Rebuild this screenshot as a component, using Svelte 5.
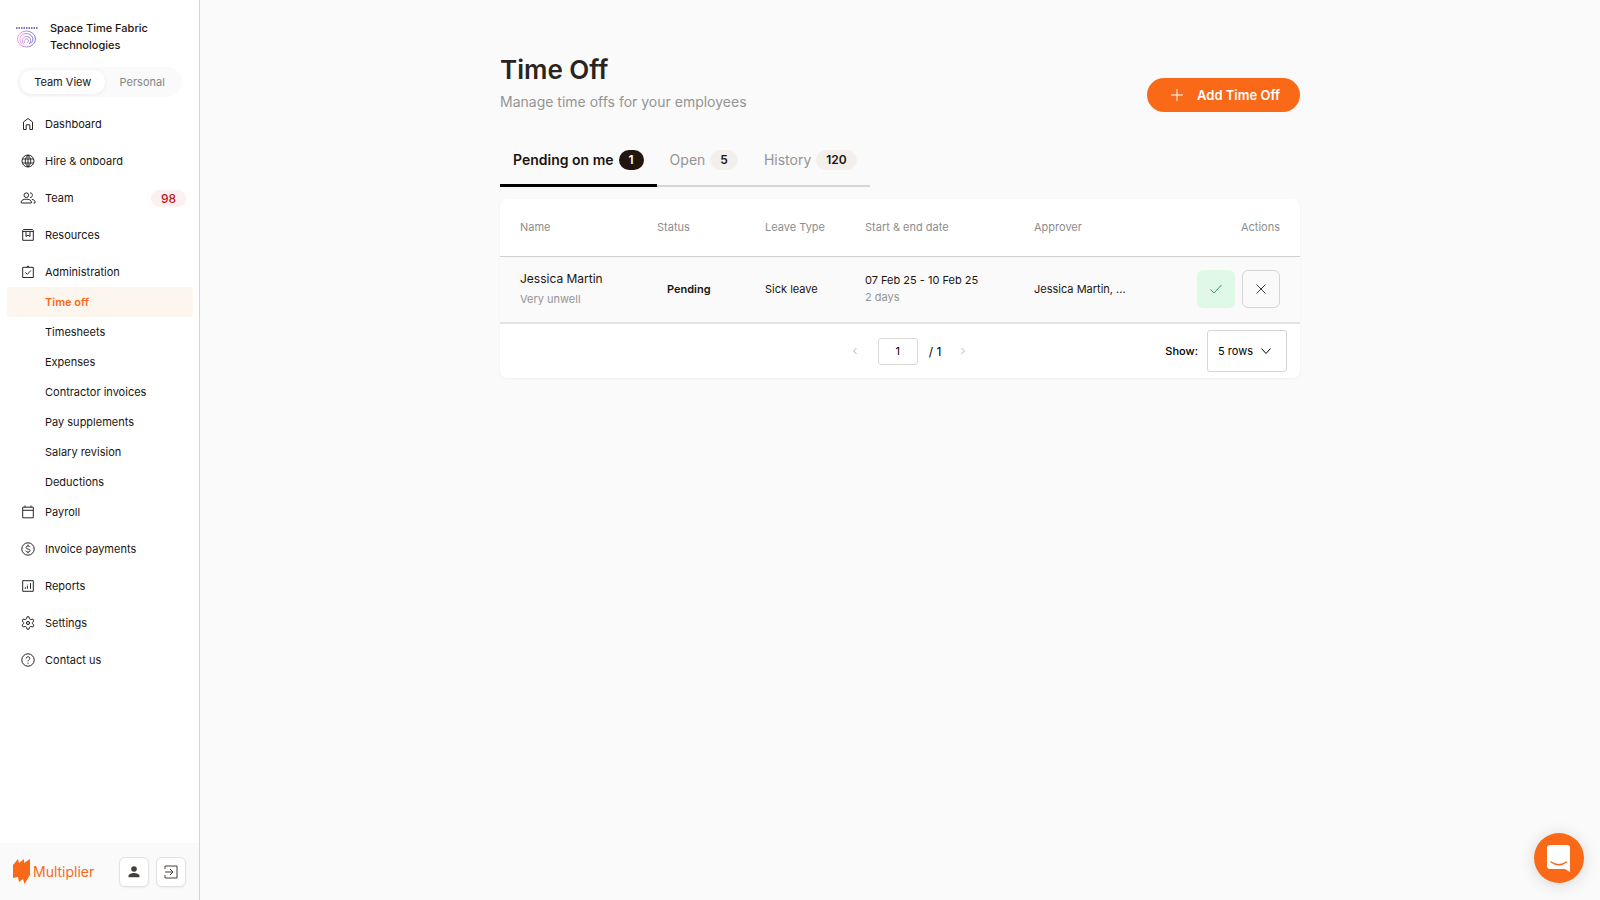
<script>
  const icons = {
    home: 'M3.5 13.5V6L8 2.5 12.5 6v7.5h-2.7V8.8H6.2v4.7z',
    globe:
      'M14 8A6 6 0 1 1 2 8a6 6 0 0 1 12 0zM8 2c-3.6 3.6-3.6 8.4 0 12M8 2c3.6 3.6 3.6 8.4 0 12M2.6 6h10.8M2.6 10h10.8M8 2v12',
    team:
      'M8.6 5.2a2.3 2.3 0 1 1-4.6 0 2.3 2.3 0 0 1 4.6 0zM1.3 13v-1.3C1.3 10 4 9.2 6.3 9.2s5 .8 5 2.5V13zM10 2.9c3.2-.3 3.2 4.8 0 4.6M11.8 9.4c2.2.4 3.2 1.2 3.2 2.4V13h-1.6',
    resources:
      'M2.7 3.6V13.3h10.6V3.6l-.9-1.1H3.6zM2.7 4.4h10.6M6 4.6v4.9l2-1.4 2 1.4V4.6',
    admin: 'M2.7 3.3h10.6v10.2H2.7zM6.6 3.2L8 1.9l1.4 1.3M5.4 8.4l1.9 1.9 3.6-3.8',
    calendar: 'M2.7 3.2h10.6v10.6H2.7zM2.7 6.3h10.6M5 3.2V1.5M11 3.2V1.5',
    dollar:
      'M14.2 8A6.2 6.2 0 1 1 1.8 8a6.2 6.2 0 0 1 12.4 0zM10 6.2C9.6 5.2 9 5 8 5c-2.6 0-2.6 2.7 0 3s2.8 3 0 3c-1.2 0-1.9-.4-2.1-1.4M8 3.7V5M8 11v1.3',
    reports: 'M2.7 2.7h10.6v10.6H2.7zM5.3 10.8V9.2M7.4 10.8V7.7M7.4 6.4v-.4M10.5 10.8V5.2',
    settings:
      'M7 1.8h2l.5 2 1.3.8 2-.6 1.1 2-1.6 1.4v1.2l1.6 1.4-1.1 2-2-.6-1.300.8-.5 2H7l-.5-2-1.300-.8-2 .6-1.100-2 1.600-1.400V7.400L2.100 6l1.100-2 2 .6 1.300-.8zM9.600 8a1.600 1.600 0 1 1-3.200 0 1.600 1.600 0 0 1 3.200 0zM8 7.500v1',
    help:
      'M14.2 8A6.2 6.2 0 1 1 1.8 8a6.2 6.2 0 0 1 12.4 0zM6.2 6.4c.1-2.300 3.700-2.200 3.600 0 0 1.300-1.800 1.400-1.800 3M8 10.700v1.100',
  };

  const nav = [
    { label: 'Dashboard', icon: 'home' },
    { label: 'Hire & onboard', icon: 'globe' },
    { label: 'Team', icon: 'team', badge: 98 },
    { label: 'Resources', icon: 'resources' },
    {
      label: 'Administration',
      icon: 'admin',
      children: [
        'Time off',
        'Timesheets',
        'Expenses',
        'Contractor invoices',
        'Pay supplements',
        'Salary revision',
        'Deductions',
      ],
    },
    { label: 'Payroll', icon: 'calendar' },
    { label: 'Invoice payments', icon: 'dollar' },
    { label: 'Reports', icon: 'reports' },
    { label: 'Settings', icon: 'settings' },
    { label: 'Contact us', icon: 'help' },
  ];

  const tabs = [
    { label: 'Pending on me', count: 1 },
    { label: 'Open', count: 5 },
    { label: 'History', count: 120 },
  ];

  const requests = [
    {
      name: 'Jessica Martin',
      note: 'Very unwell',
      status: 'Pending',
      type: 'Sick leave',
      dates: '07 Feb 25 - 10 Feb 25',
      days: '2 days',
      approver: 'Jessica Martin, ...',
    },
  ];

  let activePage = $state('Time off');
  let activeTab = $state('Pending on me');
  let view = $state('Team View');
  let page = $state('1');
  let rows = $state('5 rows');
</script>

<div class="app">
  <aside class="sidebar">
    <div class="company">
      <svg class="company-logo" viewBox="0 0 22 22" aria-hidden="true">
        <defs>
          <linearGradient id="swirl" x1="0" x2="1">
            <stop offset="0" stop-color="#f3a0dc" />
            <stop offset="1" stop-color="#7d78d8" />
          </linearGradient>
        </defs>
        <path d="M0 2h22" stroke="#7377c4" stroke-width="2" stroke-dasharray="1.5 1" />
        <g fill="none" stroke="url(#swirl)" stroke-width="1">
          <ellipse cx="10.5" cy="13" rx="9" ry="8" />
          <path
            d="M6 18c-4-4-2-10 4-10.5 6 0 9 6 5 10M8 18.5c-3-3-2-7 2-8 5 0 6 5 3 7.5M9 17c-2-2 0-4.5 2-4 2 .5 2 3 0 3.5" />
        </g>
      </svg>
      <span>Space Time Fabric Technologies</span>
    </div>

    <div class="switch">
      {#each ['Team View', 'Personal'] as option}
        <button class:on={view === option} onclick={() => (view = option)}>{option}</button>
      {/each}
    </div>

    <nav>
      <ul class="menu">
        {#each nav as item}
          <li class:group={item.children}>
            <a class="item" href="#top">
              <svg viewBox="0 0 16 16" aria-hidden="true"><path d={icons[item.icon]} /></svg>
              <span>{item.label}</span>
              {#if item.badge}
                <span class="badge">{item.badge}</span>
              {/if}
            </a>
            {#if item.children}
              <ul class="submenu">
                {#each item.children as child}
                  <li>
                    <a
                      href="#top"
                      class:active={activePage === child}
                      onclick={() => (activePage = child)}>{child}</a>
                  </li>
                {/each}
              </ul>
            {/if}
          </li>
        {/each}
      </ul>
    </nav>

    <footer class="account">
      <a class="brand" href="#top">
        <svg viewBox="0 0 17 25" aria-hidden="true">
          <path d="M0 6l5-6 1 4 5-4v4l6-4v16l-5.500 9-1.500-5-4 3-1-5-5 1z" />
        </svg>
        <span>Multiplier</span>
      </a>
      <button aria-label="Profile">
        <svg viewBox="0 0 16 16">
          <circle cx="8" cy="5" r="2.8" />
          <path d="M2.5 13.3v-1.2C2.5 9.9 5.7 9 8 9s5.5.9 5.5 3.1v1.2z" />
        </svg>
      </button>
      <button aria-label="Log out">
        <svg class="line" viewBox="0 0 16 16">
          <path d="M2 5V2h12v12H2v-3M2 8h7.5M7 5l3 3-3 3" />
        </svg>
      </button>
    </footer>
  </aside>

  <main>
    <div class="content">
      <header>
        <div>
          <h1>Time Off</h1>
          <p>Manage time offs for your employees</p>
        </div>
        <button class="add">
          <svg viewBox="0 0 12 12" aria-hidden="true"><path d="M6 0v12M0 6h12" /></svg>
          Add Time Off
        </button>
      </header>

      <div class="tabs" role="tablist">
        {#each tabs as tab}
          <button
            role="tab"
            aria-selected={activeTab === tab.label}
            class:selected={activeTab === tab.label}
            onclick={() => (activeTab = tab.label)}>
            {tab.label}
            <span class="count">{tab.count}</span>
          </button>
        {/each}
      </div>

      <section class="card">
        <table>
          <thead>
            <tr>
              <th class="name">Name</th>
              <th class="status">Status</th>
              <th class="type">Leave Type</th>
              <th class="dates">Start &amp; end date</th>
              <th class="approver">Approver</th>
              <th class="actions">Actions</th>
            </tr>
          </thead>
          <tbody>
            {#each requests as request}
              <tr>
                <td>
                  <div class="person">{request.name}</div>
                  <div class="muted">{request.note}</div>
                </td>
                <td><strong>{request.status}</strong></td>
                <td>{request.type}</td>
                <td>
                  <div>{request.dates}</div>
                  <div class="muted">{request.days}</div>
                </td>
                <td>{request.approver}</td>
                <td>
                  <div class="buttons">
                    <button class="approve" aria-label="Approve">
                      <svg viewBox="0 0 14 14"><path d="M1.5 7.5L5 11l7.5-8" /></svg>
                    </button>
                    <button class="reject" aria-label="Reject">
                      <svg viewBox="0 0 14 14"><path d="M2.5 2.5l9 9M11.5 2.5l-9 9" /></svg>
                    </button>
                  </div>
                </td>
              </tr>
            {/each}
          </tbody>
        </table>

        <div class="paging">
          <div class="pager">
            <button aria-label="Previous page" disabled>
              <svg viewBox="0 0 8 8"><path d="M5.5 1l-3 3 3 3" /></svg>
            </button>
            <input aria-label="Page" bind:value={page} />
            <span class="total">/ 1</span>
            <button aria-label="Next page" disabled>
              <svg viewBox="0 0 8 8"><path d="M2.5 1l3 3-3 3" /></svg>
            </button>
          </div>
          <div class="size">
            <label for="rows">Show:</label>
            <div class="select">
              <select id="rows" bind:value={rows}>
                <option>5 rows</option>
                <option>10 rows</option>
                <option>20 rows</option>
              </select>
              <svg viewBox="0 0 12 12" aria-hidden="true"><path d="M1.5 3.5L6 8.5l4.5-5" /></svg>
            </div>
          </div>
        </div>
      </section>
    </div>
  </main>

  <button class="chat" aria-label="Open chat">
    <svg viewBox="0 0 26 28">
      <path
        d="M4 1h17a3 3 0 0 1 3 3v24l-5-3H4a3 3 0 0 1-3-3V4a3 3 0 0 1 3-3z"
        fill="#fff" />
      <path
        d="M5 18c4.5 3.5 11 3.5 15.500 0"
        fill="none"
        stroke="#f96918"
        stroke-width="1.5"
        stroke-linecap="round" />
    </svg>
  </button>
</div>

<style>
  :global(body) {
    margin: 0;
    background: #fafafa;
  }
  .app {
    display: flex;
    min-height: 100vh;
    font-family: Inter, "Open Sans", sans-serif;
    font-size: 11px;
    line-height: 17px;
    color: #1c1410;
  }
  .app * {
    box-sizing: border-box;
  }
  button,
  input,
  select {
    margin: 0;
    padding: 0;
    border: 0;
    background: none;
    font: inherit;
    color: inherit;
  }
  button {
    cursor: pointer;
  }
  a {
    color: inherit;
    text-decoration: none;
  }
  ul {
    margin: 0;
    padding: 0;
    list-style: none;
  }
  svg {
    flex: none;
    fill: none;
    stroke: currentColor;
  }

  .sidebar {
    display: flex;
    flex: none;
    flex-direction: column;
    width: 200px;
    border-right: 1px solid #d4d4d4;
    background: #fff;
  }
  .company {
    display: flex;
    align-items: center;
    gap: 12px;
    padding: 20px 24px 0 16px;
    font-weight: 500;
  }
  .company-logo {
    width: 22px;
    height: 22px;
  }
  .switch {
    display: flex;
    margin: 13px 17px 12px;
    padding: 3px;
    border-radius: 15px;
    background: #fafafa;
  }
  .switch button {
    flex: auto;
    height: 24px;
    border-radius: 12px;
    color: #858585;
  }
  .switch .on {
    background: #fff;
    box-shadow: 0 1px 4px rgba(0, 0, 0, 0.06);
    color: #1c1410;
  }
  nav {
    flex: 1;
  }
  .menu > li {
    margin-bottom: 7px;
  }
  .menu > .group {
    margin-bottom: 0;
  }
  .item {
    display: flex;
    align-items: center;
    gap: 9px;
    height: 30px;
    padding: 0 13px 0 20px;
  }
  .item svg {
    width: 16px;
    height: 16px;
    color: #2b2623;
  }
  .badge {
    margin-left: auto;
    padding: 0 10px;
    border-radius: 9px;
    background: #fdf0f0;
    font-size: 12px;
    font-weight: 500;
    color: #c2101c;
  }
  .submenu a {
    display: block;
    height: 30px;
    margin: 0 6px 0 7px;
    padding-left: 38px;
    border-radius: 4px;
    line-height: 30px;
  }
  .submenu .active {
    background: #fcf6ee;
    font-weight: 600;
    color: #f96918;
  }
  .account {
    display: flex;
    align-items: center;
    gap: 7px;
    height: 57px;
    padding: 0 13px;
    background: #fafafa;
  }
  .brand {
    display: flex;
    flex: 1;
    align-items: center;
    gap: 3px;
    font-size: 14px;
    color: #f96918;
  }
  .brand svg {
    width: 17px;
    height: 25px;
    fill: currentColor;
    stroke: none;
  }
  .account button {
    display: grid;
    place-items: center;
    width: 30px;
    height: 30px;
    border: 1px solid #e2e2e2;
    border-radius: 6px;
    background: #fff;
    box-shadow: 0 1px 2px rgba(0, 0, 0, 0.06);
    color: #453f3b;
  }
  .account button svg {
    width: 16px;
    height: 16px;
    fill: currentColor;
    stroke: none;
  }
  .account button .line {
    fill: none;
    stroke: currentColor;
  }

  main {
    flex: 1;
    padding: 52px 20px 40px;
  }
  .content {
    max-width: 800px;
    margin: 0 auto;
  }
  header {
    display: flex;
    align-items: flex-end;
    justify-content: space-between;
  }
  h1 {
    margin: 0;
    font-size: 26px;
    font-weight: 600;
    line-height: 36px;
    color: #2a231e;
  }
  p {
    margin: 4px 0 0;
    font-size: 14px;
    line-height: 20px;
    color: #949494;
  }
  .add {
    display: flex;
    align-items: center;
    gap: 14px;
    height: 34px;
    padding: 0 20px 0 24px;
    border-radius: 17px;
    background: #f96918;
    font-size: 13px;
    font-weight: 600;
    color: #fff;
  }
  .add svg {
    width: 12px;
    height: 12px;
  }
  .tabs {
    display: inline-flex;
    margin: 26px 0 12px;
    box-shadow: inset 0 -2px #d6d6d6;
  }
  .tabs button {
    display: flex;
    align-items: center;
    gap: 5px;
    height: 49px;
    padding: 0 13px 3px;
    border-bottom: 3px solid transparent;
    font-size: 14px;
    color: #949494;
  }
  .tabs .selected {
    border-bottom-color: #000;
    font-weight: 600;
    color: #1c1410;
  }
  .count {
    padding: 2px 10px;
    border-radius: 11px;
    background: #f3efed;
    font-size: 12px;
    font-weight: 600;
    line-height: 16px;
    color: #1c1410;
  }
  .selected .count {
    background: #20150f;
    color: #fff;
  }

  .card {
    border-radius: 7px;
    background: #fff;
    box-shadow: 0 1px 3px rgba(0, 0, 0, 0.05);
  }
  table {
    width: 100%;
    border-collapse: collapse;
    table-layout: fixed;
  }
  th {
    height: 57px;
    padding: 0;
    border-bottom: 1px solid #cfcfcf;
    font-weight: 400;
    text-align: left;
    color: #8d8d8d;
  }
  td {
    height: 67px;
    padding: 0;
    border-bottom: 2px solid #e4e4e4;
    background: #fafafa;
  }
  th:first-child,
  td:first-child {
    padding-left: 20px;
  }
  th:last-child,
  td:last-child {
    padding-right: 20px;
    text-align: right;
  }
  .name {
    width: 157px;
  }
  .status {
    width: 108px;
  }
  .type {
    width: 100px;
  }
  .dates {
    width: 169px;
  }
  .person {
    margin-bottom: 4px;
    font-size: 12px;
  }
  .muted {
    color: #949494;
  }
  strong {
    padding-left: 10px;
    font-weight: 600;
  }
  .buttons {
    display: flex;
    justify-content: flex-end;
    gap: 7px;
  }
  .buttons button {
    display: grid;
    place-items: center;
    width: 38px;
    height: 38px;
    border-radius: 6px;
  }
  .buttons svg {
    width: 14px;
    height: 14px;
  }
  .approve {
    background: #e0f9e7;
    color: #2d9a68;
  }
  .buttons .reject {
    border: 1px solid #d6d6d6;
    color: #3f3b38;
  }

  .paging {
    display: grid;
    grid-template-columns: 1fr auto 1fr;
    align-items: center;
    padding: 6px 13px;
    color: #000;
  }
  .pager {
    display: flex;
    grid-column: 2;
    align-items: center;
    padding-left: 18px;
  }
  .pager button {
    display: grid;
    place-items: center;
    width: 8px;
    height: 20px;
    color: #b5b5b5;
  }
  .pager svg {
    width: 8px;
    height: 8px;
  }
  .pager input {
    width: 40px;
    height: 27px;
    margin: 0 11px 0 19px;
    border: 1px solid #dadada;
    border-radius: 3px;
    background: #fff;
    text-align: center;
  }
  .total {
    margin-right: 18px;
    font-size: 12px;
  }
  .size {
    display: flex;
    align-items: center;
    justify-content: flex-end;
    gap: 9px;
    font-weight: 500;
  }
  .select {
    position: relative;
    font-weight: 400;
  }
  .select select {
    width: 80px;
    height: 42px;
    padding-left: 10px;
    border: 1px solid #d6d6d6;
    border-radius: 3px;
    background: #fff;
    appearance: none;
  }
  .select svg {
    position: absolute;
    top: 15px;
    right: 15px;
    width: 12px;
    height: 12px;
    pointer-events: none;
  }

  .chat {
    position: fixed;
    right: 16px;
    bottom: 17px;
    display: grid;
    place-items: center;
    width: 50px;
    height: 50px;
    border-radius: 50%;
    background: #f96918;
    box-shadow: 0 2px 16px rgba(0, 0, 0, 0.14);
  }
  .chat svg {
    width: 26px;
    height: 28px;
    stroke: none;
  }
</style>
